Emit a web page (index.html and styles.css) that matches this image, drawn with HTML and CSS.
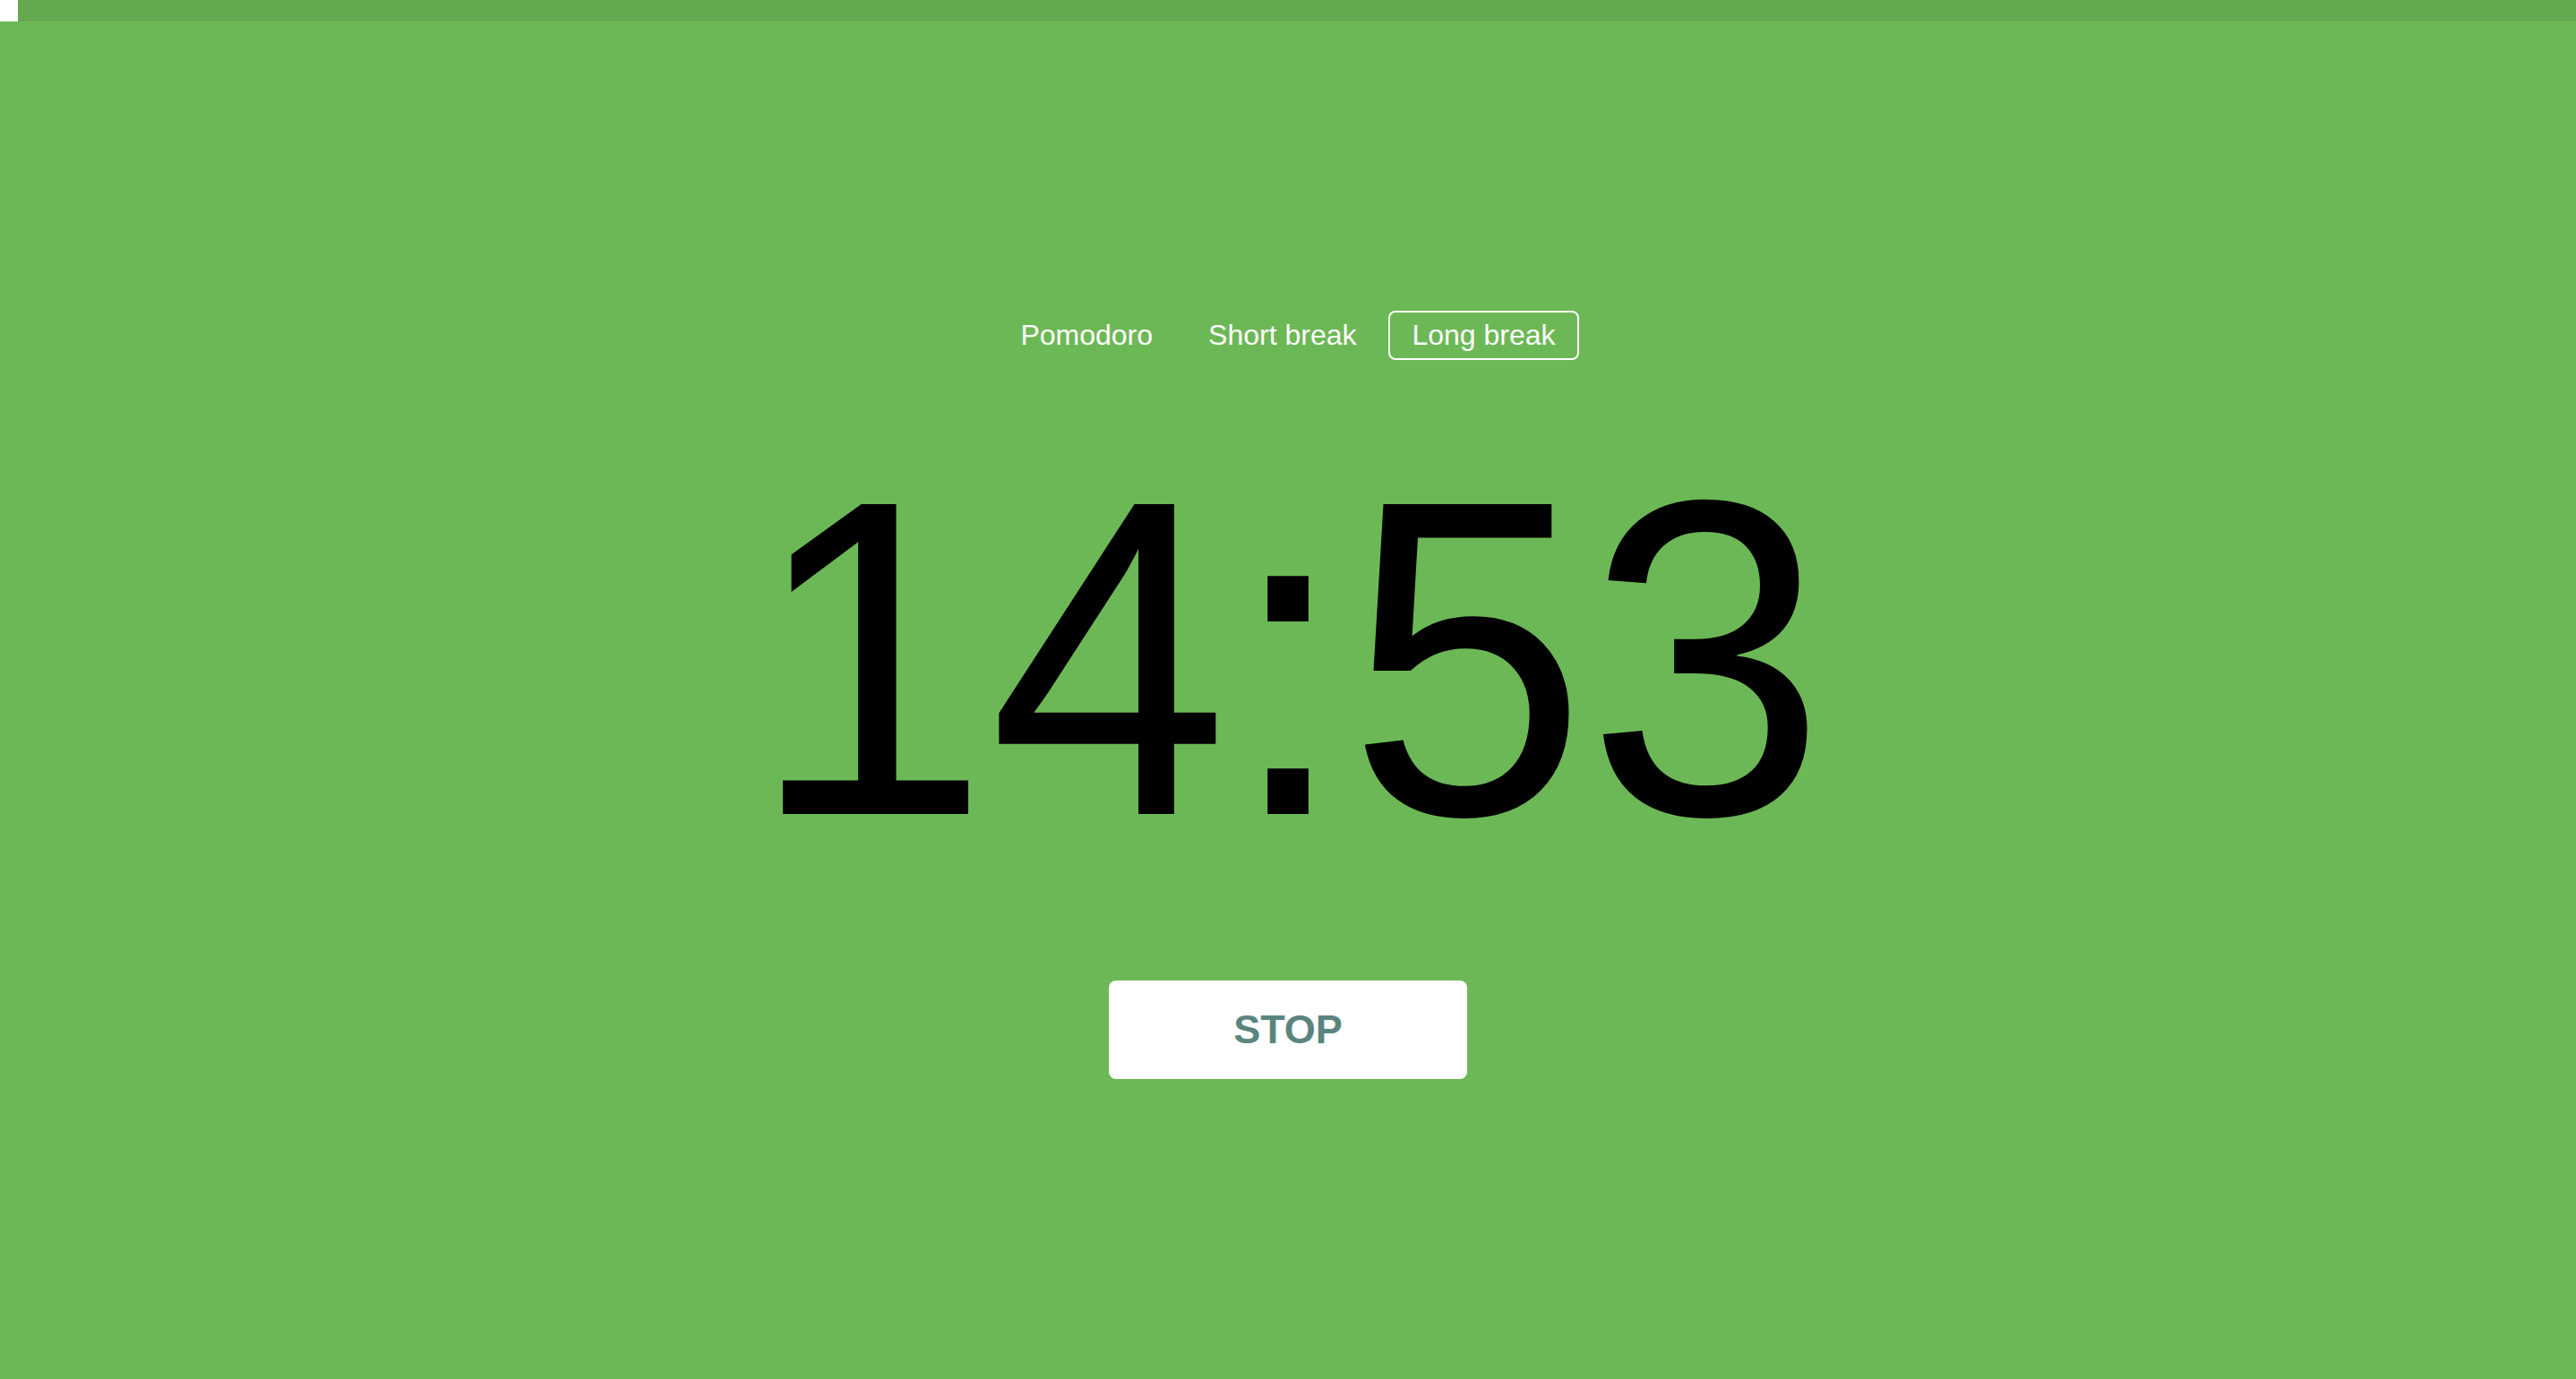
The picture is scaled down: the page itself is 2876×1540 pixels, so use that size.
FILE: index.html
```html
<!DOCTYPE html>
<html lang="en">
<head>
<meta charset="utf-8">
<title>Pomodoro Timer</title>
<link rel="stylesheet" href="styles.css">
</head>
<body>
  <div class="progress"><div class="progress-fill" style="width: 20px"></div></div>
  <main class="timer-app">
    <nav class="tabs">
      <button class="tab">Pomodoro</button>
      <button class="tab">Short break</button>
      <button class="tab tab-active">Long break</button>
    </nav>
    <div class="time">14:53</div>
    <button class="action">STOP</button>
  </main>
</body>
</html>
```

FILE: styles.css
```css
html, body {
  margin: 0;
  padding: 0;
}

body {
  background: rgb(109, 184, 86);
  height: 1540px;
  overflow: hidden;
  font-family: "Liberation Sans", Arial, sans-serif;
}

.progress {
  height: 24px;
  background: rgba(0, 0, 0, 0.09);
  display: flex;
}

.progress-fill {
  background: #ffffff;
  height: 100%;
}

.timer-app {
  display: flex;
  flex-direction: column;
  align-items: center;
  padding-top: 323px;
}

.tabs {
  display: flex;
  gap: 10px;
}

.tab {
  font-family: "Liberation Sans", Arial, sans-serif;
  font-size: 32px;
  line-height: 35px;
  color: #ffffff;
  background: transparent;
  border: 2px solid transparent;
  border-radius: 8px;
  padding: 8px 24px;
  margin: 0;
  cursor: pointer;
}

.tab-active {
  border-color: #ffffff;
}

.time {
  margin-top: 101px;
  font-family: "Liberation Sans", Arial, sans-serif;
  font-size: 480px;
  line-height: 480px;
  height: 480px;
  color: #000000;
  transform: scaleY(1.048);
  transform-origin: 50% 406px;
}

.action {
  margin-top: 112px;
  width: 400px;
  height: 110px;
  background: #ffffff;
  border: none;
  border-radius: 8px;
  font-family: "Liberation Sans", Arial, sans-serif;
  font-weight: bold;
  font-size: 45px;
  color: rgb(90, 133, 127);
  padding: 0;
  cursor: pointer;
}
```
